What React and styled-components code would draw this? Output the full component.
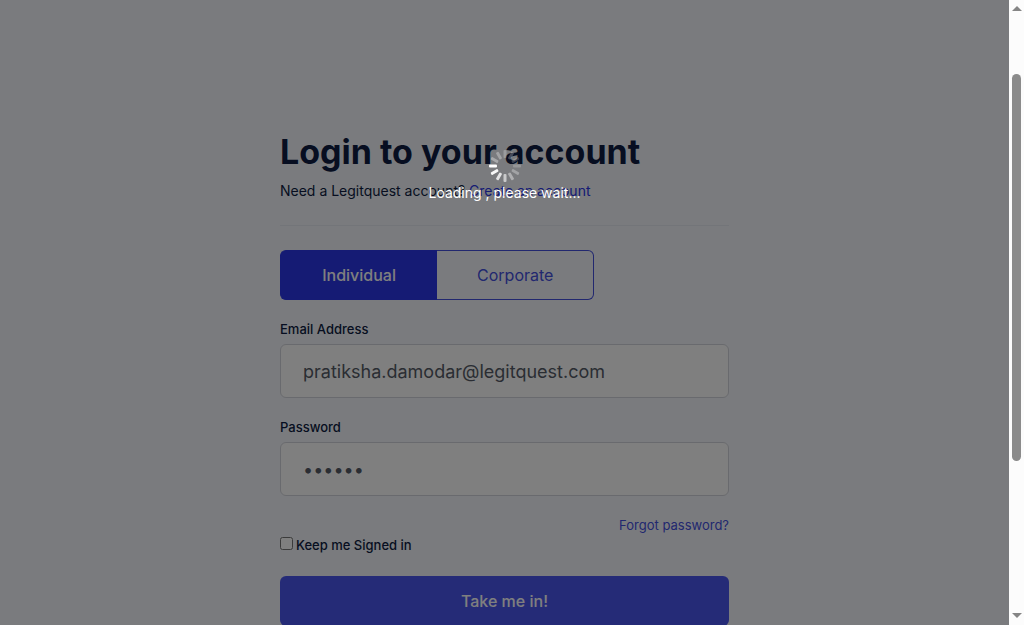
import React, { useState } from "react";
import styled, { createGlobalStyle } from "styled-components";

const GlobalStyle = createGlobalStyle`
  *, *::before, *::after { box-sizing: border-box; }
  body {
    margin: 0;
    overflow: hidden;
    background: #f5f7ff;
    color: #0e1d42;
    font-family: Inter, "Liberation Sans", sans-serif;
  }
  h1, p { margin: 0; }
  button, input { font-family: inherit; }
`;

const Shell = styled.div`
  display: flex;
  height: 100vh;
`;

const Page = styled.main`
  position: relative;
  flex: 1;
  overflow: hidden;
  background: #f5f7fd;
`;

const Panel = styled.form`
  width: 100%;
  max-width: 449px;
  margin: 0 auto;
  padding-top: 130px;
`;

const Title = styled.h1`
  font-size: 34px;
  line-height: 44px;
  font-weight: 700;
  white-space: nowrap;
`;

const Intro = styled.p`
  padding: 6px 0 24px;
  border-bottom: 1px solid #e7eaf3;
  font-size: 14px;
  line-height: 21px;
`;

const RegisterLink = styled.a`
  color: #2a37e8;
  text-decoration: none;
`;

const Tabs = styled.div`
  display: flex;
  width: 70%;
  height: 50px;
  margin: 24px 0 20px;
`;

const Tab = styled.button`
  flex: 1;
  padding: 0;
  border: 1px solid ${(p) => (p.$active ? "#2a37e8" : "#4450df")};
  background: ${(p) => (p.$active ? "#2a37e8" : "transparent")};
  color: ${(p) => (p.$active ? "#ffffff" : "#4450df")};
  font-size: 16px;
  font-weight: ${(p) => (p.$active ? 500 : 400)};

  &:first-child {
    border-right: 0;
    border-radius: 6px 0 0 6px;
  }
  &:last-child {
    border-left: 0;
    border-radius: 0 6px 6px 0;
  }
`;

const Field = styled.div`
  display: flex;
  flex-direction: column;
  gap: 6px;
  margin-bottom: 20px;
`;

const Label = styled.label`
  font-size: 13px;
  line-height: 18px;
  font-weight: 500;
`;

const Input = styled.input`
  width: 100%;
  height: 54px;
  padding: 0 22px;
  border: 1px solid #d3d5dc;
  border-radius: 6px;
  outline: 0;
  background: #ffffff;
  color: #555b66;
  font-size: 18px;
`;

const Forgot = styled.a`
  display: block;
  color: #4450df;
  text-align: right;
  text-decoration: none;
  font-size: 13px;
  line-height: 18px;
`;

const Remember = styled.div`
  display: flex;
  align-items: center;
  gap: 3px;
  margin: 2px 0 22px;
`;

const Checkbox = styled.input`
  width: 13px;
  height: 13px;
  margin: 0 0 3px;
`;

const Submit = styled.button`
  width: 100%;
  height: 50px;
  border: 0;
  border-radius: 6px;
  background: #4b57ee;
  color: #ffffff;
  font-size: 16px;
  font-weight: 500;
`;

const Overlay = styled.div`
  position: absolute;
  inset: 0;
  display: flex;
  flex-direction: column;
  align-items: center;
  padding-top: 150px;
  background: rgba(0, 0, 0, 0.5);
  color: #ffffff;
  font-size: 14px;
  line-height: 22px;
  font-weight: 400;
`;

const Scrollbar = styled.div`
  display: flex;
  flex-direction: column;
  align-items: center;
  flex: 0 0 15px;
  padding: 6px 0;
  background: #fcfcfc;
`;

const Track = styled.div`
  display: grid;
  grid-template-rows: 62fr 387fr 152fr;
  flex: 1;
  width: 9px;
`;

const Thumb = styled.div`
  grid-row: 2;
  border-radius: 5px;
  background: #8b8b8b;
`;

const SPOKES = [0.25, 0.25, 0.2, 0.2, 0.3, 0.4, 0.6, 0.8, 0.95, 1, 0.35, 0.3];

function Spinner() {
  return (
    <svg width="32" height="32" viewBox="0 0 32 32" aria-hidden="true">
      {SPOKES.map((opacity, i) => (
        <rect
          key={i}
          x="14.5"
          y="0"
          width="3"
          height="8"
          rx="1"
          fill="#fff"
          opacity={opacity}
          transform={`rotate(${i * 30} 16 16)`}
        />
      ))}
    </svg>
  );
}

function Arrow({ down }) {
  return (
    <svg width="10" height="6" viewBox="0 0 10 6" aria-hidden="true">
      <path d={down ? "M0 0h10L5 5z" : "M5 0l5 5H0z"} fill="#858585" />
    </svg>
  );
}

export default function App() {
  const [account, setAccount] = useState("Individual");
  const [email, setEmail] = useState("pratiksha.damodar@legitquest.com");
  const [password, setPassword] = useState("secret");

  return (
    <Shell>
      <GlobalStyle />
      <Page>
        <Panel onSubmit={(e) => e.preventDefault()}>
          <Title>Login to your account</Title>
          <Intro>
            Need a Legitquest account?{" "}
            <RegisterLink href="#register">Create an account</RegisterLink>
          </Intro>
          <Tabs>
            {["Individual", "Corporate"].map((name) => (
              <Tab
                key={name}
                type="button"
                $active={name === account}
                aria-pressed={name === account}
                onClick={() => setAccount(name)}
              >
                {name}
              </Tab>
            ))}
          </Tabs>
          <Field>
            <Label htmlFor="email">Email Address</Label>
            <Input
              id="email"
              type="email"
              value={email}
              onChange={(e) => setEmail(e.target.value)}
            />
          </Field>
          <Field>
            <Label htmlFor="password">Password</Label>
            <Input
              id="password"
              type="password"
              value={password}
              onChange={(e) => setPassword(e.target.value)}
            />
          </Field>
          <Forgot href="#forgot">Forgot password?</Forgot>
          <Remember>
            <Checkbox id="remember" type="checkbox" />
            <Label htmlFor="remember">Keep me Signed in</Label>
          </Remember>
          <Submit type="submit">Take me in!</Submit>
        </Panel>
        <Overlay role="status">
          <Spinner />
          Loading , please wait...
        </Overlay>
      </Page>
      <Scrollbar aria-hidden="true">
        <Arrow />
        <Track>
          <Thumb />
        </Track>
        <Arrow down />
      </Scrollbar>
    </Shell>
  );
}
